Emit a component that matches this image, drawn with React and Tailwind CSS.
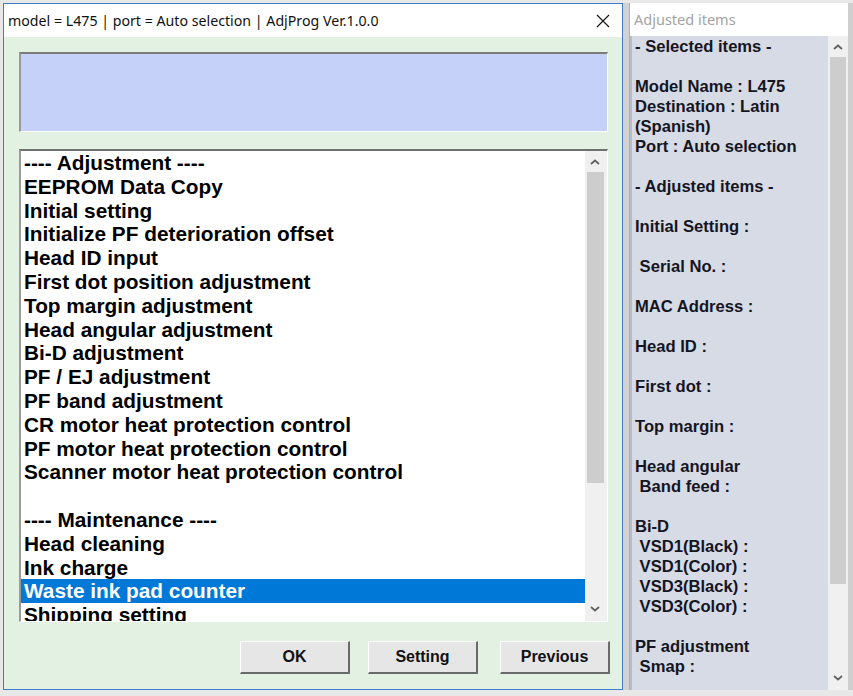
import React from 'react';

const ITEMS = [
  '---- Adjustment ----',
  'EEPROM Data Copy',
  'Initial setting',
  'Initialize PF deterioration offset',
  'Head ID input',
  'First dot position adjustment',
  'Top margin adjustment',
  'Head angular adjustment',
  'Bi-D adjustment',
  'PF / EJ adjustment',
  'PF band adjustment',
  'CR motor heat protection control',
  'PF motor heat protection control',
  'Scanner motor heat protection control',
  '',
  '---- Maintenance ----',
  'Head cleaning',
  'Ink charge',
  'Waste ink pad counter',
  'Shipping setting',
];

const SELECTED = 'Waste ink pad counter';

const REPORT = [
  '- Selected items -',
  '',
  'Model Name : L475',
  'Destination : Latin',
  '(Spanish)',
  'Port : Auto selection',
  '',
  '- Adjusted items -',
  '',
  'Initial Setting :',
  '',
  ' Serial No. :',
  '',
  'MAC Address :',
  '',
  'Head ID :',
  '',
  'First dot :',
  '',
  'Top margin :',
  '',
  'Head angular',
  ' Band feed :',
  '',
  'Bi-D',
  ' VSD1(Black) :',
  ' VSD1(Color) :',
  ' VSD3(Black) :',
  ' VSD3(Color) :',
  '',
  'PF adjustment',
  ' Smap :',
];

const Chevron = ({ up }) => (
  <svg width="10" height="6" viewBox="0 0 10 6">
    <polyline
      points={up ? '1,5 5,1.5 9,5' : '1,1 5,4.5 9,1'}
      fill="none"
      stroke="#606060"
      strokeWidth="1.7"
    />
  </svg>
);

const Button = ({ children, className = '' }) => (
  <button
    className={`h-[33px] w-[110px] bg-[#e6e6e6] border-t border-l border-t-white border-l-white border-b-2 border-r-2 border-b-[#6a6a6a] border-r-[#6a6a6a] text-[16px] font-bold text-[#111] ${className}`}
  >
    {children}
  </button>
);

export default function App() {
  return (
    <div
      className="w-[853px] h-[696px] overflow-hidden bg-[#e8e8e8] flex pt-[3px] pl-[3px]"
      style={{ fontFamily: '"Liberation Sans", Arial, sans-serif' }}
    >
      {/* main window */}
      <div className="w-[620px] h-[687px] border border-[#3b7fcc] flex flex-col shrink-0 bg-white">
        <div className="h-[33px] bg-white flex items-center justify-between pl-[4px] pr-[12px] shrink-0">
          <span
            className="text-[14.2px] text-[#111]"
            style={{ fontFamily: '"Noto Sans", "Open Sans", sans-serif' }}
          >
            model = L475 | port = Auto selection | AdjProg Ver.1.0.0
          </span>
          <svg width="14" height="14" viewBox="0 0 14 14">
            <path d="M1 1 L13 13 M13 1 L1 13" stroke="#111" strokeWidth="1.1" />
          </svg>
        </div>

        <div className="flex-1 bg-[#e3f1e3] flex flex-col pl-[15px] pr-[14px] pt-[15px]">
          <div className="h-[80px] bg-[#c6d1f9] border-t-2 border-l-2 border-t-[#7c7c7c] border-l-[#9a9a9a] border-b border-r border-b-white border-r-white" />

          <div className="mt-[17px] h-[473px] bg-white border-t-2 border-l-2 border-t-[#6f6f6f] border-l-[#9a9a9a] border-b border-r border-b-white border-r-white flex overflow-hidden">
            <div className="flex-1 overflow-hidden">
              {ITEMS.map((t, i) => (
                <div
                  key={i}
                  className={`h-[23.8px] leading-[23.8px] pl-[3px] text-[20.8px] font-bold whitespace-pre ${
                    t === SELECTED ? 'bg-[#0078d7] text-white' : 'text-black'
                  }`}
                >
                  {t || ' '}
                </div>
              ))}
            </div>
            <div className="w-[22px] bg-[#f0f0f0] flex flex-col items-center shrink-0 pr-[2px]">
              <div className="h-[21px] flex items-center justify-center">
                <Chevron up />
              </div>
              <div className="w-[17px] h-[311px] bg-[#cdcdcd]" />
              <div className="flex-1" />
              <div className="h-[24px] flex items-center justify-center">
                <Chevron />
              </div>
            </div>
          </div>

          <div className="mt-[19px] flex justify-end -mr-[2px]">
            <Button>OK</Button>
            <Button className="ml-[18px] w-[109px]">Setting</Button>
            <Button className="ml-[22px]">Previous</Button>
          </div>
        </div>
      </div>

      <div className="w-[6px] shrink-0 bg-[#d2d2d2] h-[687px]" />

      {/* report window */}
      <div className="w-[219px] h-[687px] flex flex-col shrink-0 border-l border-[#b0b0b0]">
        <div className="h-[33px] bg-white flex items-center pl-[4px] shrink-0">
          <span
            className="text-[14.5px] text-[#a3a3a3]"
            style={{ fontFamily: '"Noto Sans", "Open Sans", sans-serif' }}
          >
            Adjusted items
          </span>
        </div>
        <div className="flex-1 flex bg-[#f0f0f0] overflow-hidden">
          <div className="w-[198px] bg-[#d6dbe6] border-l-2 border-[#b8bcc4] pl-[3px] pt-[1px] overflow-hidden">
            {REPORT.map((t, i) => (
              <div
                key={i}
                className="h-[20px] leading-[20px] text-[16.6px] font-bold text-[#15151f] whitespace-pre"
              >
                {t || ' '}
              </div>
            ))}
          </div>
          <div className="w-[19px] flex flex-col items-center shrink-0">
            <div className="h-[21px] flex items-center justify-center">
              <Chevron up />
            </div>
            <div className="w-[16px] h-[527px] bg-[#cdcdcd]" />
            <div className="flex-1" />
            <div className="h-[24px] flex items-center justify-center">
              <Chevron />
            </div>
          </div>
        </div>
      </div>
      <div className="flex-1 bg-[#cfcfcf] h-[687px]" />
    </div>
  );
}
